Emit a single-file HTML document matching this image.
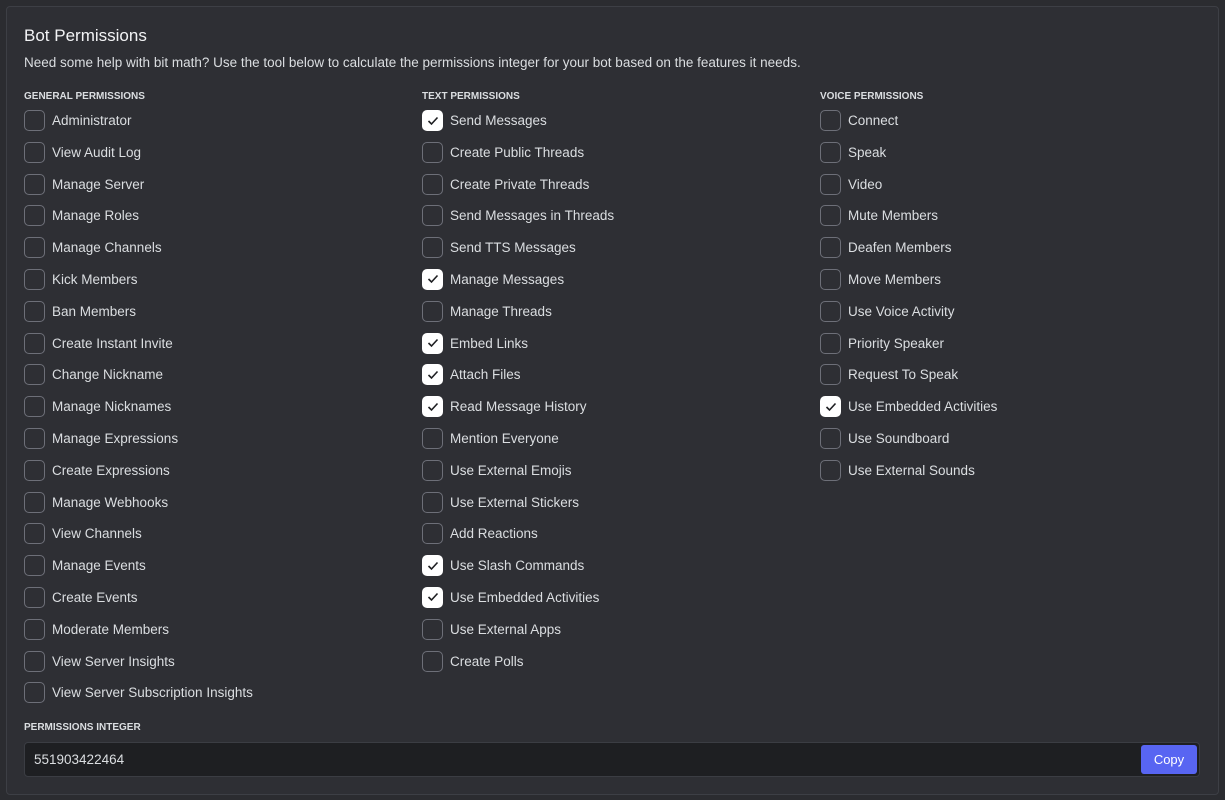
<!DOCTYPE html>
<html><head><style>
*{box-sizing:border-box;margin:0;padding:0}
body{width:1225px;height:800px;background:#2b2c30;font-family:"Liberation Sans",sans-serif;color:#dbdee1;overflow:hidden}
.panel{position:absolute;left:6px;top:6px;width:1213px;height:789px;background:#2e2f34;border:1px solid #3d3f45;border-radius:4px}
h1{position:absolute;left:17px;top:19px;font-size:17px;font-weight:normal;color:#f2f3f5}
.desc{position:absolute;left:17px;top:48px;font-size:13.5px;color:#dbdee1}
.col{position:absolute;top:84px}
.hd{font-size:10px;font-weight:bold;color:#dbdee1;height:19px;line-height:12px}
.row{height:31.8px;display:flex;align-items:flex-start;font-size:13.5px;color:#dbdee1}
.cb{width:21px;height:21px;border:1px solid #6d6f78;border-radius:5px;margin-right:7px;flex:none;display:flex;align-items:center;justify-content:center}
.cb.on{background:#fff;border-color:#fff}
.row span{line-height:21px}
.lbl{position:absolute;left:17px;top:715px;font-size:10px;font-weight:bold}
.inp{position:absolute;left:17px;top:735px;width:1176px;height:35px;background:#1e1f22;border:1px solid #3b3d43;border-radius:4px;font-size:13.5px;line-height:33px;padding-left:9px}
.btn{position:absolute;right:2px;top:2px;width:56px;height:29px;background:#5865f2;border-radius:3px;color:#fff;font-size:13px;line-height:29px;text-align:center}
</style></head><body>
<div class="panel">
<h1>Bot Permissions</h1>
<div class="desc">Need some help with bit math? Use the tool below to calculate the permissions integer for your bot based on the features it needs.</div>
<div class="col" style="left:17px"><div class="hd">GENERAL PERMISSIONS</div>
<div class="row"><div class="cb"></div><span>Administrator</span></div>
<div class="row"><div class="cb"></div><span>View Audit Log</span></div>
<div class="row"><div class="cb"></div><span>Manage Server</span></div>
<div class="row"><div class="cb"></div><span>Manage Roles</span></div>
<div class="row"><div class="cb"></div><span>Manage Channels</span></div>
<div class="row"><div class="cb"></div><span>Kick Members</span></div>
<div class="row"><div class="cb"></div><span>Ban Members</span></div>
<div class="row"><div class="cb"></div><span>Create Instant Invite</span></div>
<div class="row"><div class="cb"></div><span>Change Nickname</span></div>
<div class="row"><div class="cb"></div><span>Manage Nicknames</span></div>
<div class="row"><div class="cb"></div><span>Manage Expressions</span></div>
<div class="row"><div class="cb"></div><span>Create Expressions</span></div>
<div class="row"><div class="cb"></div><span>Manage Webhooks</span></div>
<div class="row"><div class="cb"></div><span>View Channels</span></div>
<div class="row"><div class="cb"></div><span>Manage Events</span></div>
<div class="row"><div class="cb"></div><span>Create Events</span></div>
<div class="row"><div class="cb"></div><span>Moderate Members</span></div>
<div class="row"><div class="cb"></div><span>View Server Insights</span></div>
<div class="row"><div class="cb"></div><span>View Server Subscription Insights</span></div>
</div>
<div class="col" style="left:415px"><div class="hd">TEXT PERMISSIONS</div>
<div class="row"><div class="cb on"><svg width="12" height="10" viewBox="0 0 12 10"><path d="M1.5 5l3 3 6-6.5" fill="none" stroke="#1e1f22" stroke-width="1.6"/></svg></div><span>Send Messages</span></div>
<div class="row"><div class="cb"></div><span>Create Public Threads</span></div>
<div class="row"><div class="cb"></div><span>Create Private Threads</span></div>
<div class="row"><div class="cb"></div><span>Send Messages in Threads</span></div>
<div class="row"><div class="cb"></div><span>Send TTS Messages</span></div>
<div class="row"><div class="cb on"><svg width="12" height="10" viewBox="0 0 12 10"><path d="M1.5 5l3 3 6-6.5" fill="none" stroke="#1e1f22" stroke-width="1.6"/></svg></div><span>Manage Messages</span></div>
<div class="row"><div class="cb"></div><span>Manage Threads</span></div>
<div class="row"><div class="cb on"><svg width="12" height="10" viewBox="0 0 12 10"><path d="M1.5 5l3 3 6-6.5" fill="none" stroke="#1e1f22" stroke-width="1.6"/></svg></div><span>Embed Links</span></div>
<div class="row"><div class="cb on"><svg width="12" height="10" viewBox="0 0 12 10"><path d="M1.5 5l3 3 6-6.5" fill="none" stroke="#1e1f22" stroke-width="1.6"/></svg></div><span>Attach Files</span></div>
<div class="row"><div class="cb on"><svg width="12" height="10" viewBox="0 0 12 10"><path d="M1.5 5l3 3 6-6.5" fill="none" stroke="#1e1f22" stroke-width="1.6"/></svg></div><span>Read Message History</span></div>
<div class="row"><div class="cb"></div><span>Mention Everyone</span></div>
<div class="row"><div class="cb"></div><span>Use External Emojis</span></div>
<div class="row"><div class="cb"></div><span>Use External Stickers</span></div>
<div class="row"><div class="cb"></div><span>Add Reactions</span></div>
<div class="row"><div class="cb on"><svg width="12" height="10" viewBox="0 0 12 10"><path d="M1.5 5l3 3 6-6.5" fill="none" stroke="#1e1f22" stroke-width="1.6"/></svg></div><span>Use Slash Commands</span></div>
<div class="row"><div class="cb on"><svg width="12" height="10" viewBox="0 0 12 10"><path d="M1.5 5l3 3 6-6.5" fill="none" stroke="#1e1f22" stroke-width="1.6"/></svg></div><span>Use Embedded Activities</span></div>
<div class="row"><div class="cb"></div><span>Use External Apps</span></div>
<div class="row"><div class="cb"></div><span>Create Polls</span></div>
</div>
<div class="col" style="left:813px"><div class="hd">VOICE PERMISSIONS</div>
<div class="row"><div class="cb"></div><span>Connect</span></div>
<div class="row"><div class="cb"></div><span>Speak</span></div>
<div class="row"><div class="cb"></div><span>Video</span></div>
<div class="row"><div class="cb"></div><span>Mute Members</span></div>
<div class="row"><div class="cb"></div><span>Deafen Members</span></div>
<div class="row"><div class="cb"></div><span>Move Members</span></div>
<div class="row"><div class="cb"></div><span>Use Voice Activity</span></div>
<div class="row"><div class="cb"></div><span>Priority Speaker</span></div>
<div class="row"><div class="cb"></div><span>Request To Speak</span></div>
<div class="row"><div class="cb on"><svg width="12" height="10" viewBox="0 0 12 10"><path d="M1.5 5l3 3 6-6.5" fill="none" stroke="#1e1f22" stroke-width="1.6"/></svg></div><span>Use Embedded Activities</span></div>
<div class="row"><div class="cb"></div><span>Use Soundboard</span></div>
<div class="row"><div class="cb"></div><span>Use External Sounds</span></div>
</div>
<div class="lbl">PERMISSIONS INTEGER</div>
<div class="inp">551903422464<div class="btn">Copy</div></div>
</div>
</body></html>
